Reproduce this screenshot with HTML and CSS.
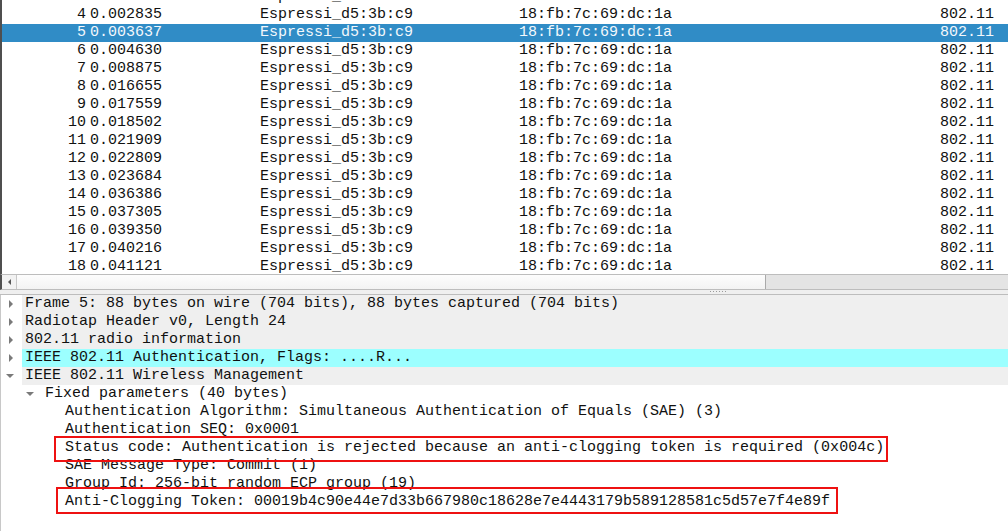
FILE: index.html
```html
<!DOCTYPE html>
<html>
<head>
<meta charset="utf-8">
<link rel="stylesheet" href="styles.css">
</head>
<body>
<div class="app">
  <div class="list">
    <div class="rows">
      <div class="row"><span class="c-no">3</span><span class="c-time">0.001790</span><span class="c-src">Espressi_d5:3b:c9</span><span class="c-dst">18:fb:7c:69:dc:1a</span><span class="c-proto">802.11</span></div>
      <div class="row"><span class="c-no">4</span><span class="c-time">0.002835</span><span class="c-src">Espressi_d5:3b:c9</span><span class="c-dst">18:fb:7c:69:dc:1a</span><span class="c-proto">802.11</span></div>
      <div class="row sel"><span class="c-no">5</span><span class="c-time">0.003637</span><span class="c-src">Espressi_d5:3b:c9</span><span class="c-dst">18:fb:7c:69:dc:1a</span><span class="c-proto">802.11</span></div>
      <div class="row"><span class="c-no">6</span><span class="c-time">0.004630</span><span class="c-src">Espressi_d5:3b:c9</span><span class="c-dst">18:fb:7c:69:dc:1a</span><span class="c-proto">802.11</span></div>
      <div class="row"><span class="c-no">7</span><span class="c-time">0.008875</span><span class="c-src">Espressi_d5:3b:c9</span><span class="c-dst">18:fb:7c:69:dc:1a</span><span class="c-proto">802.11</span></div>
      <div class="row"><span class="c-no">8</span><span class="c-time">0.016655</span><span class="c-src">Espressi_d5:3b:c9</span><span class="c-dst">18:fb:7c:69:dc:1a</span><span class="c-proto">802.11</span></div>
      <div class="row"><span class="c-no">9</span><span class="c-time">0.017559</span><span class="c-src">Espressi_d5:3b:c9</span><span class="c-dst">18:fb:7c:69:dc:1a</span><span class="c-proto">802.11</span></div>
      <div class="row"><span class="c-no">10</span><span class="c-time">0.018502</span><span class="c-src">Espressi_d5:3b:c9</span><span class="c-dst">18:fb:7c:69:dc:1a</span><span class="c-proto">802.11</span></div>
      <div class="row"><span class="c-no">11</span><span class="c-time">0.021909</span><span class="c-src">Espressi_d5:3b:c9</span><span class="c-dst">18:fb:7c:69:dc:1a</span><span class="c-proto">802.11</span></div>
      <div class="row"><span class="c-no">12</span><span class="c-time">0.022809</span><span class="c-src">Espressi_d5:3b:c9</span><span class="c-dst">18:fb:7c:69:dc:1a</span><span class="c-proto">802.11</span></div>
      <div class="row"><span class="c-no">13</span><span class="c-time">0.023684</span><span class="c-src">Espressi_d5:3b:c9</span><span class="c-dst">18:fb:7c:69:dc:1a</span><span class="c-proto">802.11</span></div>
      <div class="row"><span class="c-no">14</span><span class="c-time">0.036386</span><span class="c-src">Espressi_d5:3b:c9</span><span class="c-dst">18:fb:7c:69:dc:1a</span><span class="c-proto">802.11</span></div>
      <div class="row"><span class="c-no">15</span><span class="c-time">0.037305</span><span class="c-src">Espressi_d5:3b:c9</span><span class="c-dst">18:fb:7c:69:dc:1a</span><span class="c-proto">802.11</span></div>
      <div class="row"><span class="c-no">16</span><span class="c-time">0.039350</span><span class="c-src">Espressi_d5:3b:c9</span><span class="c-dst">18:fb:7c:69:dc:1a</span><span class="c-proto">802.11</span></div>
      <div class="row"><span class="c-no">17</span><span class="c-time">0.040216</span><span class="c-src">Espressi_d5:3b:c9</span><span class="c-dst">18:fb:7c:69:dc:1a</span><span class="c-proto">802.11</span></div>
      <div class="row"><span class="c-no">18</span><span class="c-time">0.041121</span><span class="c-src">Espressi_d5:3b:c9</span><span class="c-dst">18:fb:7c:69:dc:1a</span><span class="c-proto">802.11</span></div>
    </div>
  </div>
  <div class="hscroll">
    <div class="hs-btn"><span class="hs-arrow"></span></div>
    <div class="hs-thumb"></div>
    <div class="hs-track"></div>
  </div>
  <div class="splitter"><span class="grip"></span></div>
  <div class="details">
    <div class="drow top"><span class="tw"><span class="tri-r"></span></span><span class="dtext">Frame 5: 88 bytes on wire (704 bits), 88 bytes captured (704 bits)</span></div>
    <div class="drow top"><span class="tw"><span class="tri-r"></span></span><span class="dtext">Radiotap Header v0, Length 24</span></div>
    <div class="drow top"><span class="tw"><span class="tri-r"></span></span><span class="dtext">802.11 radio information</span></div>
    <div class="drow top hl"><span class="tw"><span class="tri-r"></span></span><span class="dtext">IEEE 802.11 Authentication, Flags: ....R...</span></div>
    <div class="drow top"><span class="tw"><span class="tri-d"></span></span><span class="dtext">IEEE 802.11 Wireless Management</span></div>
    <div class="drow lvl1"><span class="tw"><span class="tri-d"></span></span><span class="dtext">Fixed parameters (40 bytes)</span></div>
    <div class="drow lvl2"><span class="dtext">Authentication Algorithm: Simultaneous Authentication of Equals (SAE) (3)</span></div>
    <div class="drow lvl2"><span class="dtext">Authentication SEQ: 0x0001</span></div>
    <div class="drow lvl2"><span class="dtext">Status code: Authentication is rejected because an anti-clogging token is required (0x004c)</span></div>
    <div class="drow lvl2"><span class="dtext">SAE Message Type: Commit (1)</span></div>
    <div class="drow lvl2"><span class="dtext">Group Id: 256-bit random ECP group (19)</span></div>
    <div class="drow lvl2"><span class="dtext">Anti-Clogging Token: 00019b4c90e44e7d33b667980c18628e7e4443179b589128581c5d57e7f4e89f</span></div>
    <div class="mark mark-status"></div>
    <div class="mark mark-token"></div>
  </div>
</div>
</body>
</html>
```

FILE: styles.css
```css
html, body {
  margin: 0;
  padding: 0;
  background: #ffffff;
}
body {
  font-family: "Liberation Mono", "DejaVu Sans Mono", monospace;
  font-size: 15px;
  color: #111111;
  width: 1008px;
  height: 531px;
  overflow: hidden;
}
.app {
  display: flex;
  flex-direction: column;
  height: 531px;
}
.list {
  height: 274px;
  overflow: hidden;
  border-left: 2px solid #4f4f4f;
  background: #ffffff;
  flex: none;
}
.rows {
  margin-top: -12px;
}
.row {
  display: grid;
  grid-template-columns: 84px 174px 259px 1fr auto;
  height: 18px;
  line-height: 18px;
  padding-right: 14px;
  white-space: pre;
}
.row.sel {
  background: #308cc6;
  color: #f4f8fc;
}
.c-no {
  text-align: right;
}
.c-time {
  padding-left: 4px;
}
.c-proto {
  text-align: right;
}
.hscroll {
  flex: none;
  height: 14px;
  display: flex;
  border-top: 1px solid #bdbdbd;
  border-bottom: 1px solid #bdbdbd;
  border-left: 2px solid #4f4f4f;
  background: #e4e4e4;
}
.hs-btn {
  width: 14px;
  border-right: 1px solid #c8c8c8;
  background: #f2f2f2;
  display: flex;
  align-items: center;
  justify-content: center;
}
.hs-arrow {
  width: 0;
  height: 0;
  border-top: 3px solid transparent;
  border-bottom: 3px solid transparent;
  border-right: 3px solid #555555;
}
.hs-thumb {
  width: 748px;
  background: linear-gradient(#fdfdfd, #f3f3f3);
  border-right: 1px solid #aaaaaa;
}
.hs-track {
  flex: 1;
}
.splitter {
  flex: none;
  height: 4px;
  border-bottom: 1px solid #bdbdbd;
  background: #efefef;
  position: relative;
}
.grip {
  position: absolute;
  left: 710px;
  top: 1px;
  width: 17px;
  height: 1px;
  background: repeating-linear-gradient(90deg, #9a9a9a 0 1px, transparent 1px 3px);
}
.details {
  flex: 1;
  position: relative;
  border-left: 1px solid #c8c8c8;
  background: #ffffff;
}
.drow {
  display: flex;
  height: 18px;
  line-height: 18px;
  white-space: pre;
}
.tw {
  width: 21px;
  flex: none;
  display: flex;
  align-items: center;
  justify-content: center;
  background: #ffffff;
}
.tri-r {
  width: 0;
  height: 0;
  border-top: 4px solid transparent;
  border-bottom: 4px solid transparent;
  border-left: 4px solid #7a7a7a;
  margin-left: -1px;
}
.tri-d {
  width: 0;
  height: 0;
  border-left: 4px solid transparent;
  border-right: 4px solid transparent;
  border-top: 4px solid #7a7a7a;
  margin-left: -3px;
}
.drow.top .dtext {
  flex: 1;
  padding-left: 3px;
  background: #efefef;
}
.drow.top.hl .dtext {
  background: #9cffff;
}
.drow.lvl1 {
  padding-left: 20px;
}
.drow.lvl1 .dtext {
  padding-left: 3px;
}
.drow.lvl2 .dtext {
  padding-left: 64px;
}
.mark {
  position: absolute;
  border: 2px solid #ee1111;
  box-sizing: border-box;
}
.mark-status {
  left: 53px;
  top: 141px;
  width: 834px;
  height: 26px;
}
.mark-token {
  left: 55px;
  top: 192px;
  width: 782px;
  height: 27px;
}
```
